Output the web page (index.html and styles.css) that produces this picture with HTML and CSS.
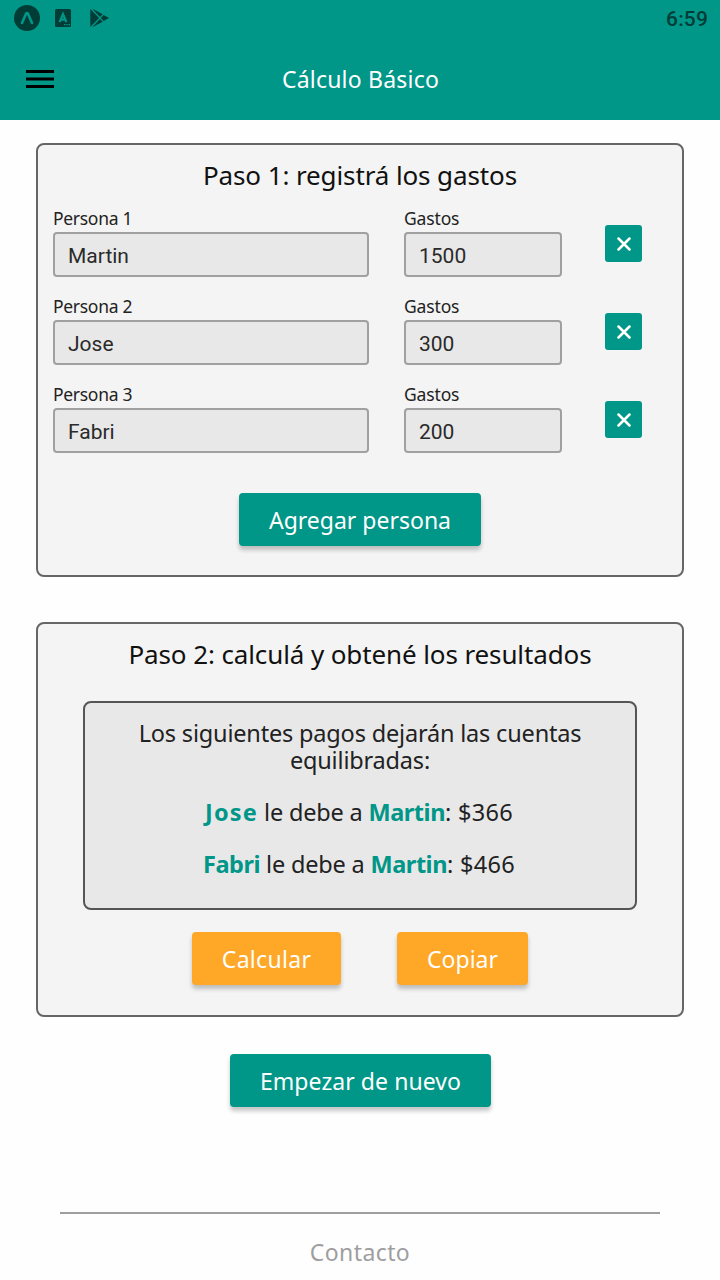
FILE: index.html
```html
<!DOCTYPE html>
<html lang="es">
<head>
<meta charset="utf-8">
<title>Cálculo Básico</title>
<link rel="stylesheet" href="styles.css">
</head>
<body>
<header class="app-header">
  <div class="status-bar">
    <div class="status-icons">
      <svg width="26" height="26" viewBox="0 0 26 26"><circle cx="13" cy="13" r="13" fill="#003d37"/><path d="M8 18 12 8.8q1-1.5 2 0l4 9.2" fill="none" stroke="#009688" stroke-width="2.6" stroke-linecap="round"/></svg>
      <svg class="icon-a" width="16" height="18" viewBox="0 0 16 18"><rect width="16" height="18" rx="1.5" fill="#003d37"/><path d="M4.6 13.2 8 5 11.4 13.2M5.8 10.7h4.4" fill="none" stroke="#009688" stroke-width="2.2"/><path d="M9 15.7h6" stroke="#009688" stroke-width="1.2" stroke-dasharray="1.4 .9"/></svg>
      <svg class="icon-play" width="20" height="20" viewBox="0 0 20 20"><path d="M.3 1v18L9 10zM2 .5 10 9l2.6-2.7zM2 19.5 10 11l2.6 2.7zM13.6 6.9 10.8 10l2.8 3.1L19 10z" fill="#003d37"/></svg>
    </div>
    <span class="clock">6:59</span>
  </div>
  <div class="toolbar">
    <svg class="menu" width="28" height="18" viewBox="0 0 28 18"><path d="M0 1.5h28M0 9h28M0 16.5h28" stroke="#000" stroke-width="3"/></svg>
    <h1>Cálculo Básico</h1>
  </div>
</header>
<main>
  <section class="card people">
    <h2>Paso 1: registrá los gastos</h2>
    <div class="row">
      <label class="name">Persona 1<span class="field">Martin</span></label>
      <label class="cost">Gastos<span class="field">1500</span></label>
      <button class="remove"><svg width="14" height="14" viewBox="0 0 14 14"><path d="M1.5 1.5l11 11M12.5 1.5l-11 11" stroke="#fff" stroke-width="2.5" stroke-linecap="round"/></svg></button>
    </div>
    <div class="row">
      <label class="name">Persona 2<span class="field">Jose</span></label>
      <label class="cost">Gastos<span class="field">300</span></label>
      <button class="remove"><svg width="14" height="14" viewBox="0 0 14 14"><path d="M1.5 1.5l11 11M12.5 1.5l-11 11" stroke="#fff" stroke-width="2.5" stroke-linecap="round"/></svg></button>
    </div>
    <div class="row">
      <label class="name">Persona 3<span class="field">Fabri</span></label>
      <label class="cost">Gastos<span class="field">200</span></label>
      <button class="remove"><svg width="14" height="14" viewBox="0 0 14 14"><path d="M1.5 1.5l11 11M12.5 1.5l-11 11" stroke="#fff" stroke-width="2.5" stroke-linecap="round"/></svg></button>
    </div>
    <button class="btn add">Agregar persona</button>
  </section>
  <section class="card results">
    <h2>Paso 2: calculá y obtené los resultados</h2>
    <div class="summary">
      <p>Los siguientes pagos dejarán las cuentas</p>
      <p>equilibradas:</p>
      <p class="debt"><b class="jose">Jose</b> le debe a <b>Martin</b><span class="amount">: $366</span></p>
      <p class="debt"><b>Fabri</b> le debe a <b>Martin</b><span class="amount">: $466</span></p>
    </div>
    <div class="actions">
      <button class="btn calc">Calcular</button>
      <button class="btn copy">Copiar</button>
    </div>
  </section>
  <button class="btn restart">Empezar de nuevo</button>
</main>
<footer>Contacto</footer>
</body>
</html>
```

FILE: styles.css
```css
* { box-sizing: border-box; }
body {
  margin: 0;
  width: 720px;
  height: 1280px;
  overflow: hidden;
  display: flex;
  flex-direction: column;
  background: #fefefe;
  color: #222;
  font-family: "Noto Sans", sans-serif;
}
h1, h2, p { margin: 0; font-weight: 400; white-space: nowrap; }
svg { display: block; flex: none; }
button { border: 0; padding: 0; font-family: inherit; white-space: nowrap; }

.app-header { height: 120px; background: #009688; }
.status-bar {
  height: 36px;
  padding: 0 12px 0 14px;
  display: flex;
  align-items: center;
  justify-content: space-between;
}
.status-icons { display: flex; align-items: center; }
.icon-a { margin-left: 15px; }
.icon-play { margin-left: 19px; }
.clock {
  font: 500 21px/36px Roboto, sans-serif;
  letter-spacing: .15px;
  color: #003d37;
  padding-top: 2px;
}
.toolbar {
  height: 84px;
  padding: 0 26px;
  display: grid;
  grid-template-columns: 28px 1fr 28px;
  align-items: center;
}
.menu { margin-top: 2px; }
h1 {
  text-align: center;
  font-size: 23px;
  line-height: 32px;
  letter-spacing: .2px;
  color: #fff;
  padding: 1px 0 0 1px;
}

main { display: flex; flex-direction: column; align-items: center; padding-top: 23px; }
.card {
  width: 648px;
  border: 2px solid #666;
  border-radius: 8px;
  background: #f4f4f4;
}
.people { height: 434px; padding: 13px 15px 0; }
.results { height: 395px; margin-top: 45px; padding-top: 13px; }
h2 { text-align: center; font-size: 26px; line-height: 34px; letter-spacing: -.11px; color: #111; }

.row { height: 88px; display: flex; align-items: flex-start; }
.people h2 { margin-bottom: 14px; }
.row label {
  display: block;
  font-size: 17.5px;
  line-height: 24px;
  letter-spacing: -.3px;
  white-space: nowrap;
}
.row .name { width: 316px; margin-right: 35px; }
.row .cost { width: 158px; margin-right: 43px; letter-spacing: -.15px; }
.field {
  display: block;
  height: 45px;
  margin-top: 2px;
  padding-left: 13px;
  border: 2px solid #a0a0a0;
  border-radius: 4px;
  background: #e8e8e8;
  color: #2a2a2a;
  font: 21px/45px Roboto, sans-serif;
  letter-spacing: 0;
}
.remove {
  width: 37px;
  height: 37px;
  margin-top: 19px;
  border-radius: 3px;
  background: #009688;
  display: grid;
  place-items: center;
}

.btn {
  height: 53px;
  padding-top: 2px;
  border-radius: 4px;
  background: #009688;
  color: #fff;
  font-size: 23px;
  line-height: 51px;
  box-shadow: 0 4px 4px rgba(0, 0, 0, .22);
}
.add { display: block; width: 242px; margin: 23px auto 0; }
.summary {
  width: 554px;
  height: 209px;
  margin: 30px auto 0;
  padding-top: 17px;
  border: 2px solid #555;
  border-radius: 8px;
  background: #e8e8e8;
  text-align: center;
  font-size: 23.5px;
  line-height: 27px;
  letter-spacing: -.18px;
}
.debt { margin-top: 25px; padding-right: 2px; }
b { color: #009688; font-weight: 700; letter-spacing: -.45px; }
.jose { letter-spacing: 1.2px; }
.amount { letter-spacing: .3px; }
.actions { display: flex; justify-content: center; gap: 56px; margin-top: 22px; }
.calc, .copy { background: #ffa726; }
.calc { width: 149px; letter-spacing: .3px; }
.copy { width: 131px; }
.restart { width: 261px; margin-top: 37px; padding-left: 1px; letter-spacing: .07px; }

footer {
  width: 600px;
  margin: 105px auto 0;
  padding-top: 21px;
  border-top: 2px solid #9e9e9e;
  text-align: center;
  font-size: 23px;
  line-height: 34px;
  letter-spacing: .4px;
  color: #9e9e9e;
}
```
